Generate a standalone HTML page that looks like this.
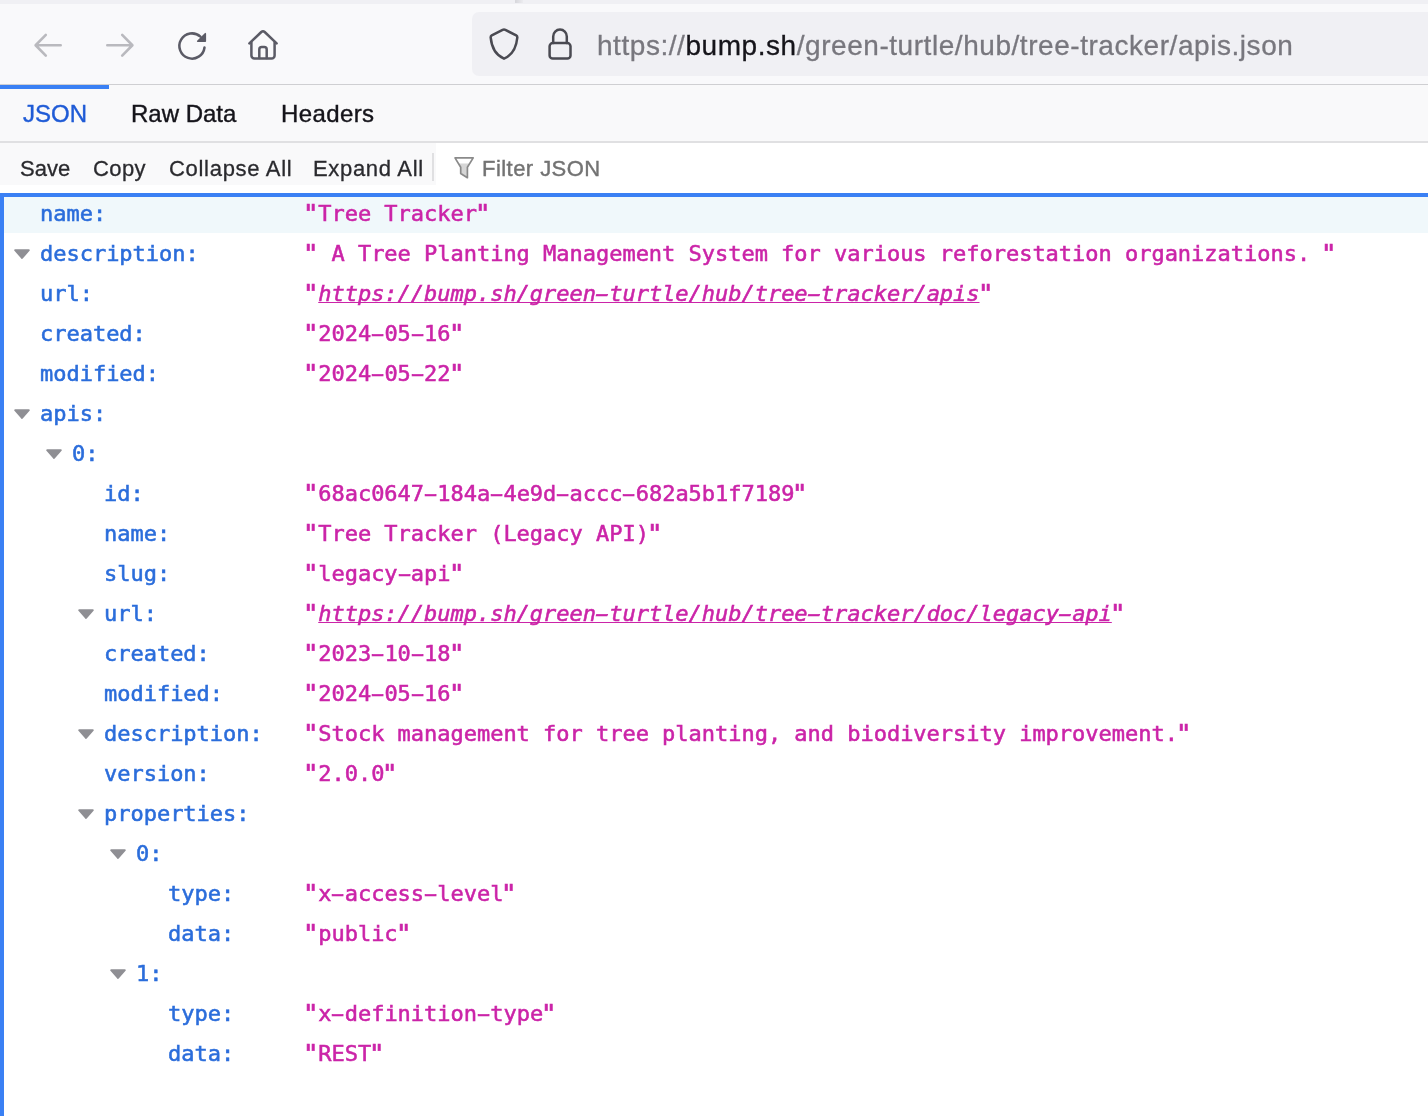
<!DOCTYPE html>
<html lang="en">
<head>
<meta charset="utf-8">
<title>apis.json</title>
<style>
*{box-sizing:border-box;margin:0;padding:0}
html,body{width:1428px;height:1116px;overflow:hidden;background:#fff}
body{position:relative;will-change:transform;font-family:"Liberation Sans",sans-serif;color:#15141a}
.abs{position:absolute}
#topstrip{left:0;top:0;width:1428px;height:4px;background:#f0f0f4}
#topnub{left:515px;top:0;width:8px;height:3px;background:linear-gradient(90deg,#d6d6db,#ececf0)}
#chrome{left:0;top:4px;width:1428px;height:80px;background:#f9f9fb}
#chromeline{left:0;top:84px;width:1428px;height:1px;background:#cfcfd2}
#urlbar{left:472px;top:12px;width:980px;height:64px;border-radius:7px;background:#f0f0f4}
#urltext{left:597px;top:31px;-webkit-text-stroke:0.3px;font-size:28px;line-height:30px;white-space:nowrap;color:#78777e;letter-spacing:0.55px}
#urltext b{font-weight:normal;color:#15141a}
#tabs{left:0;top:85px;width:1428px;height:57px;background:#f9f9fa}
#tabline{left:0;top:141px;width:1428px;height:2px;background:#e0e0e2}
#tabsel{left:0;top:85px;width:109px;height:4px;background:#3a80f4}
.tab{-webkit-text-stroke:0.4px;top:100px;font-size:24px;line-height:28px;white-space:nowrap;color:#15141a}
#tb{left:0;top:143px;width:1428px;height:42px;background:#f9f9fa}
#filterbox{left:436px;top:143px;width:992px;height:50px;background:#fff}
.btn{-webkit-text-stroke:0.3px;top:155px;font-size:22px;line-height:28px;white-space:nowrap;color:#2a2a2e}
#sep{left:432px;top:153px;width:2px;height:28px;background:#e0e0e2}
#filtertxt{-webkit-text-stroke:0.4px;left:482px;top:155px;font-size:22px;line-height:28px;color:#737373;white-space:nowrap;letter-spacing:0.45px}
#focusTop{left:0;top:193px;width:1428px;height:4px;background:#3a80f4}
#focusLeft{left:0;top:193px;width:4px;height:923px;background:#3a80f4}
#rowsel{left:4px;top:197px;width:1424px;height:36px;background:#f0f8fb}
.r{position:absolute;left:0;height:40px;line-height:40px;font-family:"DejaVu Sans Mono","Liberation Mono",monospace;font-size:22px;white-space:nowrap;-webkit-text-stroke:0.55px;letter-spacing:-0.02px}
.k{position:absolute;top:0;color:#2b6ddb}
.v{position:absolute;top:0;left:305px;color:#cb24a8}
.v i{font-style:oblique;text-decoration:underline;text-decoration-thickness:1.4px;text-underline-offset:1.2px;text-decoration-skip-ink:none}
.h{display:inline-block;transform:scaleX(1.9)}
.v i .h{text-decoration:underline;text-decoration-thickness:1.4px;text-underline-offset:1.2px;text-decoration-skip-ink:none}
.q{display:inline-block;transform:translate(-1px,-0.5px) scale(1.2,1.1);transform-origin:50% 40%}
.tw{position:absolute;top:15px;width:16px;height:10px;overflow:visible}
</style>
</head>
<body>
<div id="topstrip" class="abs"></div>
<div id="topnub" class="abs"></div>
<div id="chrome" class="abs"></div>
<div id="chromeline" class="abs"></div>
<div id="urlbar" class="abs"></div>
<div id="urltext" class="abs">https://<b>bump.sh</b>/green-turtle/hub/tree-tracker/apis.json</div>

<div id="tabs" class="abs"></div>
<div id="tabline" class="abs"></div>
<div id="tabsel" class="abs"></div>
<div class="abs tab" style="left:23px;color:#1f5bd6">JSON</div>
<div class="abs tab" style="left:131px">Raw Data</div>
<div class="abs tab" style="left:281px;letter-spacing:0.4px">Headers</div>

<div id="tb" class="abs"></div>
<div id="filterbox" class="abs"></div>
<div class="abs btn" style="left:20px">Save</div>
<div class="abs btn" style="left:93px;letter-spacing:0.4px">Copy</div>
<div class="abs btn" style="left:169px;letter-spacing:0.7px">Collapse All</div>
<div class="abs btn" style="left:313px;letter-spacing:0.68px">Expand All</div>
<div id="sep" class="abs"></div>
<div id="filtertxt" class="abs">Filter JSON</div>

<svg class="abs" style="left:0;top:0" width="1428" height="200" viewBox="0 0 1428 200" fill="none" stroke-linecap="round" stroke-linejoin="round">
<g stroke="#b9b9be" stroke-width="2.6">
<path d="M60.7 45.25H36M45.8 34.95L35.6 45.25l10.2 10.3"/>
<path d="M107.3 45.25H132M122.2 34.95L132.4 45.25l-10.2 10.3"/>
</g>
<g stroke="#5b5b66" stroke-width="2.500">
<path d="M200.43 36.64A12.6 12.6 0 1 0 204.5 47.5"/>
<path d="M205.3 33.7v7.6h-7.600z" fill="#5b5b66" stroke-width="1.600"/>
<path d="M249.400 43.400L261.300 32Q263 30.400 264.700 32L276.600 43.400"/>
<path d="M251.4 42.5v13.1a3 3 0 0 0 3 3h17.2a3 3 0 0 0 3-3V42.5"/>
<path d="M259.300 58V49.600a2.500 2.500 0 0 1 2.500-2.500h2.400a2.500 2.500 0 0 1 2.500 2.500V58"/>
</g>
<g stroke="#4a4a52" stroke-width="2.500">
<path d="M502.600 29.900Q504 29.200 505.400 29.900L516.200 35.400Q517.500 36.150 517.300 37.600C516.240 48.590 510.920 55.680 504 58.650C497.080 55.680 491.760 48.590 490.700 37.600Q490.500 36.150 491.800 35.400z"/>
<rect x="549.600" y="43.100" width="20.900" height="15.500" rx="3.200"/>
<path d="M553.200 43v-6.600a6.800 6.800 0 0 1 13.600 0V43"/>
</g>
<path d="M458.500 163.500h11l-2.500 4v9.500l-6-3.700v-5.800z" fill="#d6d6d6"/>
<path d="M455 157.900h18.200l-5.800 9.400v10.400l-6.700-4.200v-6.200z" stroke="#8a8a8a" stroke-width="1.700"/>
</svg>
<div id="focusTop" class="abs"></div>
<div id="focusLeft" class="abs"></div>
<div id="rowsel" class="abs"></div>

<div id="tree">
<div class="r" style="top:194px"><span class="k" style="left:40px">name:</span><span class="v"><span class="q">"</span>Tree Tracker<span class="q">"</span></span></div>
<div class="r" style="top:234px"><svg class="tw" style="left:14px" viewBox="0 0 16 10"><path d="M1.200 1.200H14.800L8 8.900z" fill="#8f8f94" stroke="#8f8f94" stroke-width="2" stroke-linejoin="round"/></svg><span class="k" style="left:40px">description:</span><span class="v"><span class="q">"</span> A Tree Planting Management System for various reforestation organizations. <span class="q">"</span></span></div>
<div class="r" style="top:274px"><span class="k" style="left:40px">url:</span><span class="v"><span class="q">"</span><i>https://bump.sh/green<span class="h">-</span>turtle/hub/tree<span class="h">-</span>tracker/apis</i><span class="q">"</span></span></div>
<div class="r" style="top:314px"><span class="k" style="left:40px">created:</span><span class="v"><span class="q">"</span>2024<span class="h">-</span>05<span class="h">-</span>16<span class="q">"</span></span></div>
<div class="r" style="top:354px"><span class="k" style="left:40px">modified:</span><span class="v"><span class="q">"</span>2024<span class="h">-</span>05<span class="h">-</span>22<span class="q">"</span></span></div>
<div class="r" style="top:394px"><svg class="tw" style="left:14px" viewBox="0 0 16 10"><path d="M1.200 1.200H14.800L8 8.900z" fill="#8f8f94" stroke="#8f8f94" stroke-width="2" stroke-linejoin="round"/></svg><span class="k" style="left:40px">apis:</span></div>
<div class="r" style="top:434px"><svg class="tw" style="left:46px" viewBox="0 0 16 10"><path d="M1.200 1.200H14.800L8 8.900z" fill="#8f8f94" stroke="#8f8f94" stroke-width="2" stroke-linejoin="round"/></svg><span class="k" style="left:72px">0:</span></div>
<div class="r" style="top:474px"><span class="k" style="left:104px">id:</span><span class="v"><span class="q">"</span>68ac0647<span class="h">-</span>184a<span class="h">-</span>4e9d<span class="h">-</span>accc<span class="h">-</span>682a5b1f7189<span class="q">"</span></span></div>
<div class="r" style="top:514px"><span class="k" style="left:104px">name:</span><span class="v"><span class="q">"</span>Tree Tracker (Legacy API)<span class="q">"</span></span></div>
<div class="r" style="top:554px"><span class="k" style="left:104px">slug:</span><span class="v"><span class="q">"</span>legacy<span class="h">-</span>api<span class="q">"</span></span></div>
<div class="r" style="top:594px"><svg class="tw" style="left:78px" viewBox="0 0 16 10"><path d="M1.200 1.200H14.800L8 8.900z" fill="#8f8f94" stroke="#8f8f94" stroke-width="2" stroke-linejoin="round"/></svg><span class="k" style="left:104px">url:</span><span class="v"><span class="q">"</span><i>https://bump.sh/green<span class="h">-</span>turtle/hub/tree<span class="h">-</span>tracker/doc/legacy<span class="h">-</span>api</i><span class="q">"</span></span></div>
<div class="r" style="top:634px"><span class="k" style="left:104px">created:</span><span class="v"><span class="q">"</span>2023<span class="h">-</span>10<span class="h">-</span>18<span class="q">"</span></span></div>
<div class="r" style="top:674px"><span class="k" style="left:104px">modified:</span><span class="v"><span class="q">"</span>2024<span class="h">-</span>05<span class="h">-</span>16<span class="q">"</span></span></div>
<div class="r" style="top:714px"><svg class="tw" style="left:78px" viewBox="0 0 16 10"><path d="M1.200 1.200H14.800L8 8.900z" fill="#8f8f94" stroke="#8f8f94" stroke-width="2" stroke-linejoin="round"/></svg><span class="k" style="left:104px">description:</span><span class="v"><span class="q">"</span>Stock management for tree planting, and biodiversity improvement.<span class="q">"</span></span></div>
<div class="r" style="top:754px"><span class="k" style="left:104px">version:</span><span class="v"><span class="q">"</span>2.0.0<span class="q">"</span></span></div>
<div class="r" style="top:794px"><svg class="tw" style="left:78px" viewBox="0 0 16 10"><path d="M1.200 1.200H14.800L8 8.900z" fill="#8f8f94" stroke="#8f8f94" stroke-width="2" stroke-linejoin="round"/></svg><span class="k" style="left:104px">properties:</span></div>
<div class="r" style="top:834px"><svg class="tw" style="left:110px" viewBox="0 0 16 10"><path d="M1.200 1.200H14.800L8 8.900z" fill="#8f8f94" stroke="#8f8f94" stroke-width="2" stroke-linejoin="round"/></svg><span class="k" style="left:136px">0:</span></div>
<div class="r" style="top:874px"><span class="k" style="left:168px">type:</span><span class="v"><span class="q">"</span>x<span class="h">-</span>access<span class="h">-</span>level<span class="q">"</span></span></div>
<div class="r" style="top:914px"><span class="k" style="left:168px">data:</span><span class="v"><span class="q">"</span>public<span class="q">"</span></span></div>
<div class="r" style="top:954px"><svg class="tw" style="left:110px" viewBox="0 0 16 10"><path d="M1.200 1.200H14.800L8 8.900z" fill="#8f8f94" stroke="#8f8f94" stroke-width="2" stroke-linejoin="round"/></svg><span class="k" style="left:136px">1:</span></div>
<div class="r" style="top:994px"><span class="k" style="left:168px">type:</span><span class="v"><span class="q">"</span>x<span class="h">-</span>definition<span class="h">-</span>type<span class="q">"</span></span></div>
<div class="r" style="top:1034px"><span class="k" style="left:168px">data:</span><span class="v"><span class="q">"</span>REST<span class="q">"</span></span></div>
</div>
</body>
</html>
